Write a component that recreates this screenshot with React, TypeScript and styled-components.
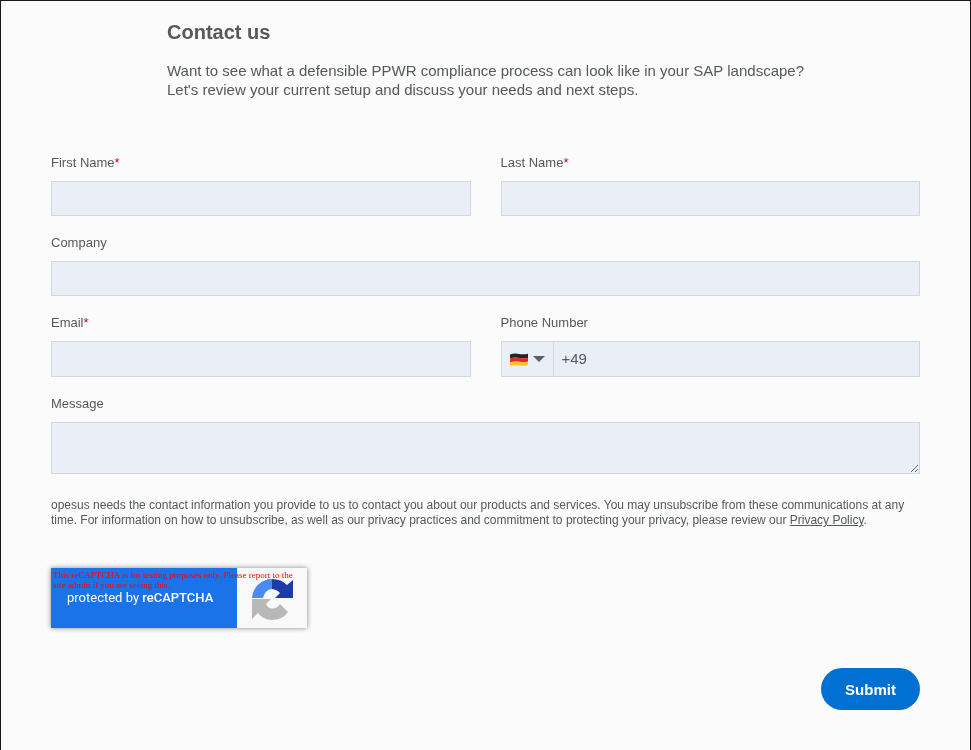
import React from 'react';
import styled, { createGlobalStyle } from 'styled-components';

const GlobalStyle = createGlobalStyle`
	html, body {
		margin: 0;
		padding: 0;
		background: #fbfbfb;
	}
	* {
		box-sizing: border-box;
	}
`;

const Frame = styled.div`
	height: 750px;
	border: 1px solid #16181a;
	border-bottom: none;
	background: #fbfbfb;
	font-family: 'Liberation Sans', Arial, sans-serif;
	color: #555959;
	overflow: hidden;
`;

const Intro = styled.section`
	padding: 19px 0 0 166px;
	will-change: transform;
`;

const Title = styled.h2`
	margin: 0;
	font-size: 20px;
	line-height: 24px;
	font-weight: 700;
`;

const Lead = styled.p`
	margin: 17px 0 0;
	font-size: 15px;
	line-height: 19px;
`;

const Form = styled.form`
	padding: 56px 50px 0;
	display: grid;
	grid-template-columns: 1fr 1fr;
	column-gap: 30px;
	will-change: transform;
`;

const Field = styled.div<{ $wide?: boolean }>`
	grid-column: ${({ $wide }) => ($wide ? '1 / -1' : 'auto')};
	display: flex;
	flex-direction: column;
	margin-bottom: 19px;
`;

const Label = styled.label`
	font-size: 13px;
	line-height: 15px;
	margin-bottom: 11px;
`;

const Req = styled.span`
	color: #d0021b;
`;

const Input = styled.input`
	display: block;
	flex: 1;
	width: 100%;
	min-height: 35px;
	padding: 0 8px;
	background: #eaeff7;
	border: 1px solid #cfd8e3;
	border-radius: 0;
	outline: none;
`;

const PhoneBox = styled.div`
	display: flex;
	height: 36px;
	background: #eaeff7;
	border: 1px solid #cfd8e3;
`;

const FlagButton = styled.div`
	width: 52px;
	flex: none;
	display: flex;
	align-items: center;
	padding-left: 8px;
	gap: 5px;
	border-right: 1px solid #cfd8e3;
`;

const Caret = styled.span`
	width: 0;
	height: 0;
	border-left: 6px solid transparent;
	border-right: 6px solid transparent;
	border-top: 6px solid #5c6060;
`;

const PhoneInput = styled.div`
	padding-left: 8px;
	font-size: 15px;
	line-height: 34px;
`;

const TextArea = styled.textarea`
	display: block;
	width: 100%;
	height: 52px;
	padding: 8px;
	background: #eaeff7;
	border: 1px solid #cfd8e3;
	border-radius: 0;
	outline: none;
	resize: vertical;
`;

const Notice = styled.p`
	grid-column: 1 / -1;
	margin: 5px 0 0;
	font-size: 12px;
	line-height: 15px;

	a {
		color: inherit;
		text-decoration: underline;
	}
`;

const Badge = styled.div`
	grid-column: 1 / -1;
	position: relative;
	margin-top: 40px;
	width: 256px;
	height: 60px;
	display: flex;
	background: #f9f9f9;
	box-shadow: gray 0 0 5px;
	overflow: hidden;
`;

const BadgeText = styled.div`
	width: 186px;
	background: #1a73e8;
	color: #fff;
	font-family: Roboto, 'Liberation Sans', sans-serif;
	font-size: 13px;
	line-height: 60px;
	padding-left: 16px;
	white-space: nowrap;

	b {
		font-weight: 500;
	}
`;

const BadgeLogo = styled.div`
	flex: 1;
	display: flex;
	align-items: center;
	justify-content: center;
	padding: 4px 0 0 2px;
`;

const BadgeWarning = styled.div`
	position: absolute;
	top: 2px;
	left: 2px;
	width: 245px;
	color: #ff0000;
	font-family: 'Liberation Serif', 'Times New Roman', serif;
	font-size: 9px;
	line-height: 10px;
`;

const Actions = styled.div`
	grid-column: 1 / -1;
	display: flex;
	justify-content: flex-end;
	margin-top: 40px;
`;

const SubmitButton = styled.button`
	width: 99px;
	height: 42px;
	border: none;
	border-radius: 21px;
	background: #0070d2;
	color: #fff;
	font-family: inherit;
	font-size: 15px;
	font-weight: 700;
	cursor: pointer;
`;

const GermanFlag = () => (
	<svg width="18" height="15" viewBox="0 0 19 15">
		<path d="M0 2.2 Q5 0.6 9.5 1.6 T19 1.4 V5.8 Q14 6.6 9.5 5.8 T0 6.4 Z" fill="#26221f" />
		<path d="M0 6.4 Q5 5 9.5 5.8 T19 5.8 V10 Q14 10.8 9.5 10 T0 10.6 Z" fill="#dd2c25" />
		<path d="M0 10.6 Q5 9.2 9.5 10 T19 10 V13.2 Q14 14.6 9.5 13.8 T0 14 Z" fill="#fbc02d" />
	</svg>
);

const RecaptchaLogo = () => (
	<svg width="42" height="42" viewBox="0 0 42 42">
		<path d="M0 19 A20 20 0 0 1 20 0 L20 10 Q13 10.5 11 19 Z" fill="#4a8af4" />
		<path d="M20 0 Q29 0 35 6 L41 1 V19 H23 L28 14 Q25 10.5 20 10 Z" fill="#1c3aa9" />
		<path d="M0 20 H19 L14 25 Q16 29.5 20.5 29.5 Q25 29.5 28 25 L36 33 Q30 41 20 41 Q11 41 6 34 L0 40 Z" fill="#b8b8b8" />
	</svg>
);

const App: React.FC = () => {
	return (
		<>
			<GlobalStyle />
			<Frame>
				<Intro>
					<Title>Contact us</Title>
					<Lead>
						Want to see what a defensible PPWR compliance process can look like in your SAP landscape?
						<br />
						Let's review your current setup and discuss your needs and next steps.
					</Lead>
				</Intro>
				<Form>
					<Field>
						<Label>First Name<Req>*</Req></Label>
						<Input />
					</Field>
					<Field>
						<Label>Last Name<Req>*</Req></Label>
						<Input />
					</Field>
					<Field $wide>
						<Label>Company</Label>
						<Input />
					</Field>
					<Field>
						<Label>Email<Req>*</Req></Label>
						<Input />
					</Field>
					<Field>
						<Label>Phone Number</Label>
						<PhoneBox>
							<FlagButton>
								<GermanFlag />
								<Caret />
							</FlagButton>
							<PhoneInput>+49</PhoneInput>
						</PhoneBox>
					</Field>
					<Field $wide>
						<Label>Message</Label>
						<TextArea />
					</Field>
					<Notice>
						opesus needs the contact information you provide to us to contact you about our products and services. You may unsubscribe from these communications at any time. For information on how to unsubscribe, as well as our privacy practices and commitment to protecting your privacy, please review our <a href="#privacy">Privacy Policy</a>.
					</Notice>
					<Badge>
						<BadgeText>protected by <b>reCAPTCHA</b></BadgeText>
						<BadgeLogo>
							<RecaptchaLogo />
						</BadgeLogo>
						<BadgeWarning>This reCAPTCHA is for testing purposes only. Please report to the site admin if you are seeing this.</BadgeWarning>
					</Badge>
					<Actions>
						<SubmitButton type="button">Submit</SubmitButton>
					</Actions>
				</Form>
			</Frame>
		</>
	);
};

export default App;
